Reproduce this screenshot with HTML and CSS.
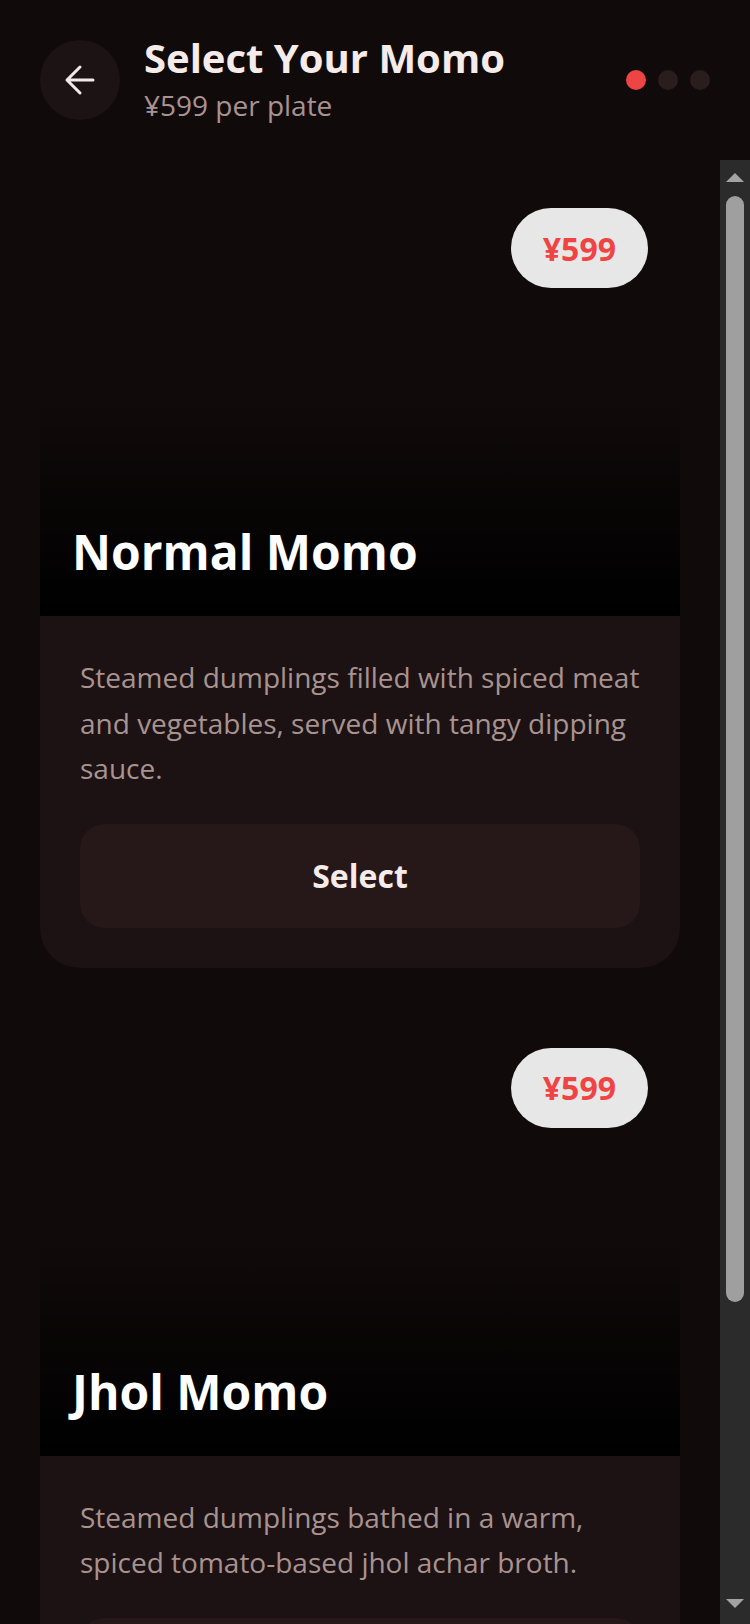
FILE: index.html
```html
<!DOCTYPE html>
<html lang="en">
<head>
<meta charset="utf-8">
<title>Select Your Momo</title>
<link rel="stylesheet" href="styles.css">
</head>
<body>
<div class="app">
  <header class="topbar">
    <button class="back" aria-label="Back">
      <svg width="32" height="32" viewBox="0 0 32 32" fill="none" stroke="#f3e9e6" stroke-width="3" stroke-linecap="round" stroke-linejoin="round"><path d="M29 16H3M16 3L3 16l13 13"/></svg>
    </button>
    <div class="heading">
      <h1 class="title">Select Your Momo</h1>
      <p class="subtitle">¥599 per plate</p>
    </div>
    <div class="steps">
      <span class="dot active"></span>
      <span class="dot"></span>
      <span class="dot"></span>
    </div>
  </header>
  <div class="viewport">
    <main class="list">
      <article class="card">
        <div class="media">
          <span class="price">¥599</span>
          <h2 class="name">Normal Momo</h2>
        </div>
        <div class="body">
          <p class="desc">Steamed dumplings filled with spiced meat and vegetables, served with tangy dipping sauce.</p>
          <button class="select">Select</button>
        </div>
      </article>
      <article class="card">
        <div class="media">
          <span class="price">¥599</span>
          <h2 class="name">Jhol Momo</h2>
        </div>
        <div class="body">
          <p class="desc">Steamed dumplings bathed in a warm, spiced tomato-based jhol achar broth.</p>
          <button class="select">Select</button>
        </div>
      </article>
    </main>
    <div class="scrollbar" aria-hidden="true">
      <span class="arrow up"></span>
      <span class="thumb"></span>
      <span class="arrow down"></span>
    </div>
  </div>
</div>
</body>
</html>
```
FILE: styles.css
```css
* { box-sizing: border-box; }
html, body {
  margin: 0;
  padding: 0;
  height: 100%;
  background: #110a0b;
  overflow: hidden;
}
body {
  font-family: "Open Sans", "Noto Sans", sans-serif;
  color: #f3e9e6;
}
.app {
  display: flex;
  flex-direction: column;
  height: 1624px;
}
.topbar {
  flex: 0 0 160px;
  display: flex;
  align-items: center;
  padding: 0 40px;
  gap: 24px;
}
.back {
  width: 80px;
  height: 80px;
  border-radius: 50%;
  border: 0;
  padding: 0;
  background: #1b1314;
  display: flex;
  align-items: center;
  justify-content: center;
  flex: 0 0 80px;
}
.heading { flex: 1; }
.title {
  margin: 0 0 4px;
  font-size: 40px;
  line-height: 1.2;
  font-weight: 700;
  color: #f5ece9;
}
.subtitle {
  margin: 0;
  font-size: 28px;
  line-height: 1.4;
  color: #a89390;
}
.steps {
  display: flex;
  gap: 12px;
}
.dot {
  width: 20px;
  height: 20px;
  border-radius: 50%;
  background: #2a1d1d;
}
.dot.active { background: #ef4444; }

.viewport {
  flex: 1;
  min-height: 0;
  display: flex;
}
.list {
  flex: 1;
  overflow-y: auto;
  scrollbar-width: none;
  padding: 16px 40px 48px;
  display: flex;
  flex-direction: column;
  gap: 48px;
}
.scrollbar {
  flex: 0 0 30px;
  background: #2b2b2b;
  display: flex;
  flex-direction: column;
  align-items: center;
  padding: 13px 0 16px;
}
.arrow {
  width: 0;
  height: 0;
  border-left: 9px solid transparent;
  border-right: 9px solid transparent;
}
.arrow.up { border-bottom: 9px solid #a3a3a3; }
.arrow.down { border-top: 9px solid #a3a3a3; margin-top: auto; }
.thumb {
  margin-top: 14px;
  width: 18px;
  height: 1106px;
  border-radius: 9px;
  background: #9f9f9f;
}

.card {
  flex: 0 0 auto;
  border-radius: 40px;
  overflow: hidden;
}
.media {
  position: relative;
  height: 440px;
  display: flex;
  align-items: flex-end;
  padding: 0 32px 32px;
  background: linear-gradient(to bottom, rgba(0,0,0,0) 50%, rgba(0,0,0,0.55) 75%, rgba(0,0,0,1) 100%);
}
.price {
  position: absolute;
  top: 32px;
  right: 32px;
  height: 80px;
  padding: 0 32px;
  border-radius: 40px;
  background: #e8e7e7;
  color: #ef4444;
  font-size: 32px;
  font-weight: 700;
  display: flex;
  align-items: center;
}
.name {
  margin: 0;
  font-size: 48px;
  line-height: normal;
  font-weight: 700;
  color: #ffffff;
}
.body {
  background: #1c1213;
  padding: 39px 40px 40px;
}
.desc {
  margin: 0 0 32px;
  font-size: 28px;
  line-height: 1.625;
  color: #a89390;
}
.select {
  display: block;
  width: 100%;
  height: 104px;
  border: 0;
  border-radius: 24px;
  background: #261718;
  color: #f5ece9;
  font-family: inherit;
  font-size: 32px;
  font-weight: 700;
}
```
